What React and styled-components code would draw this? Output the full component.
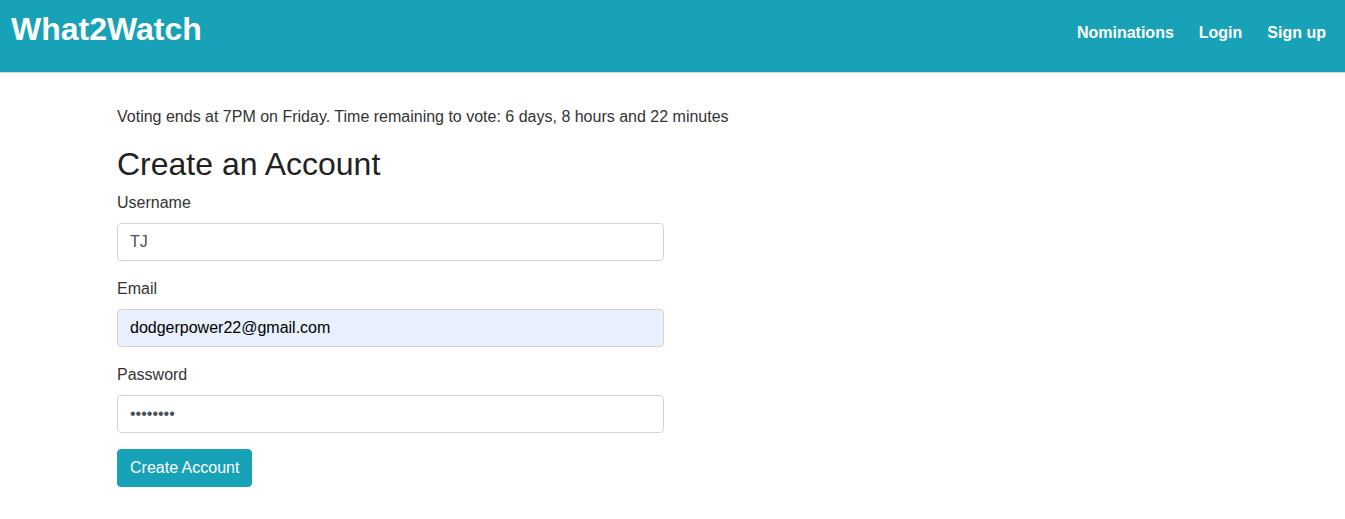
import React from "react";
import styled, { createGlobalStyle } from "styled-components";

const GlobalStyle = createGlobalStyle`
  html, body {
    margin: 0;
    padding: 0;
    background: #fff;
  }
  body {
    font-family: "Liberation Sans", Arial, sans-serif;
    font-size: 16px;
    line-height: 1.5;
    color: #212529;
  }
  * { box-sizing: border-box; }
`;

const Navbar = styled.nav`
  display: flex;
  align-items: flex-start;
  justify-content: space-between;
  height: 73px;
  background: #17a2b8;
  border-bottom: 1px solid #d6d6d6;
  padding: 0 19px 0 11px;
`;

const Brand = styled.a`
  color: #fff;
  font-size: 32px;
  font-weight: 700;
  line-height: 1;
  margin-top: 13px;
  text-decoration: none;
`;

const NavLinks = styled.div`
  display: flex;
  gap: 25px;
  margin-top: 21px;
`;

const NavLink = styled.a`
  color: #fff;
  font-size: 16px;
  font-weight: 700;
  line-height: 24px;
  text-decoration: none;
`;

const Container = styled.main`
  width: 1141px;
  margin: 0 auto;
  padding: 32px 15px 0;
`;

const Notice = styled.p`
  margin: 0 0 16px;
  color: #333;
`;

const Title = styled.h2`
  margin: 0 0 8px;
  font-size: 32px;
  font-weight: 400;
  line-height: 1.2;
  color: #222;
`;

const Form = styled.form`
  width: 547px;
`;

const Group = styled.div`
  margin-bottom: 16px;
`;

const Label = styled.label`
  display: block;
  margin-bottom: 8px;
  color: #333;
`;

const Input = styled.input`
  display: block;
  width: 100%;
  height: 38px;
  padding: 6px 12px;
  font-family: "Liberation Sans", Arial, sans-serif;
  font-size: 16px;
  color: ${(p) => (p.$autofill ? "#000" : "#495057")};
  background: ${(p) => (p.$autofill ? "#e8f0fe" : "#fff")};
  border: 1px solid #ced4da;
  border-radius: 4px;
  outline: none;
`;

const Button = styled.button`
  height: 38px;
  padding: 6px 12px;
  font-family: "Liberation Sans", Arial, sans-serif;
  font-size: 16px;
  color: #fff;
  background: #17a2b8;
  border: 1px solid #17a2b8;
  border-radius: 4px;
  cursor: pointer;
`;

export default function App() {
  return (
    <>
      <GlobalStyle />
      <Navbar>
        <Brand href="#">What2Watch</Brand>
        <NavLinks>
          <NavLink href="#">Nominations</NavLink>
          <NavLink href="#">Login</NavLink>
          <NavLink href="#">Sign up</NavLink>
        </NavLinks>
      </Navbar>
      <Container>
        <Notice>
          Voting ends at 7PM on Friday. Time remaining to vote: 6 days, 8 hours and 22 minutes
        </Notice>
        <Title>Create an Account</Title>
        <Form onSubmit={(e) => e.preventDefault()}>
          <Group>
            <Label>Username</Label>
            <Input type="text" defaultValue="TJ" />
          </Group>
          <Group>
            <Label>Email</Label>
            <Input type="email" defaultValue="dodgerpower22@gmail.com" $autofill />
          </Group>
          <Group>
            <Label>Password</Label>
            <Input type="password" defaultValue="password" />
          </Group>
          <Button type="submit">Create Account</Button>
        </Form>
      </Container>
    </>
  );
}
